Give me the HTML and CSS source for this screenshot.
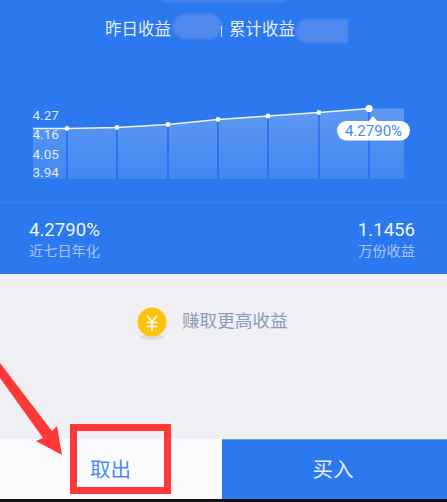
FILE: index.html
```html
<!DOCTYPE html>
<html lang="zh">
<head>
    <meta charset="UTF-8">
    <meta name="viewport" content="width=device-width, initial-scale=1.0">
    <title>收益</title>
    <link rel="stylesheet" href="styles.css">
</head>
<body>
    <div class="page">
        <section class="hero">
            <span class="smudge smudge-top"></span>
            <span class="smudge smudge-left"></span>
            <span class="smudge smudge-right"></span>
            <span class="tick"></span>
            <div class="summary">
                <span class="summary-a">昨日收益</span>
                <span class="summary-sep"></span>
                <span>累计收益</span>
            </div>
            <svg class="chart" width="447" height="110" viewBox="0 92 447 110">
                <defs>
                    <linearGradient id="area" x1="0" y1="0" x2="0" y2="1">
                        <stop offset="0" stop-color="#fff" stop-opacity="0.24"/>
                        <stop offset="1" stop-color="#fff" stop-opacity="0.1"/>
                    </linearGradient>
                </defs>
                <polygon fill="url(#area)" points="33,128.5 67,128.5 117,127.5 168,124.5 218,119.5 268,116 319,112.5 369,108.5 404,108.5 404,179 33,179"/>
                <g stroke="#1c6cf0" stroke-width="1.4">
                    <line x1="67" y1="128" x2="67" y2="179"/>
                    <line x1="117" y1="127" x2="117" y2="179"/>
                    <line x1="168" y1="124" x2="168" y2="179"/>
                    <line x1="218" y1="119" x2="218" y2="179"/>
                    <line x1="268" y1="116" x2="268" y2="179"/>
                    <line x1="319" y1="112" x2="319" y2="179"/>
                    <line x1="369" y1="108" x2="369" y2="179"/>
                </g>
                <polyline fill="none" stroke="#fff" stroke-opacity="0.9" stroke-width="1.3" points="33,128.5 67,128.5 117,127.5 168,124.5 218,119.5 268,116 319,112.5 369,108.5"/>
                <g fill="#fff">
                    <circle cx="67" cy="128.5" r="2.4"/>
                    <circle cx="117" cy="127.5" r="2.4"/>
                    <circle cx="168" cy="124.5" r="2.4"/>
                    <circle cx="218" cy="119.5" r="2.4"/>
                    <circle cx="268" cy="116" r="2.4"/>
                    <circle cx="319" cy="112.5" r="2.4"/>
                    <circle cx="369" cy="108.5" r="3.6"/>
                </g>
                <g class="axis">
                    <text x="32.5" y="120">4.27</text>
                    <text x="32.5" y="139">4.16</text>
                    <text x="32.5" y="159">4.05</text>
                    <text x="32.5" y="177">3.94</text>
                </g>
                <polygon fill="#fff" points="373,116 368,122 378,122"/>
                <rect x="337" y="121" width="73" height="19.5" rx="9.7" fill="#fff"/>
                <text class="tip" x="373.5" y="135.5" text-anchor="middle">4.2790%</text>
            </svg>
            <div class="stats">
                <div>
                    <div class="stat-value">4.2790%</div>
                    <div class="stat-label">近七日年化</div>
                </div>
                <div class="stat-right">
                    <div class="stat-value">1.1456</div>
                    <div class="stat-label">万份收益</div>
                </div>
            </div>
        </section>

        <section class="promo">
            <span class="coin">
                <svg width="30" height="34" viewBox="0 0 30 34">
                    <ellipse cx="15" cy="30" rx="12" ry="3" fill="#dcdcdc"/>
                    <circle cx="15" cy="15" r="14.5" fill="#ffc30f"/>
                    <path d="M10 8.5 L15 15 L20 8.5 M9.5 15.5 H20.5 M9.5 19.5 H20.5 M15 15 V24" fill="none" stroke="#fff" stroke-width="1.6"/>
                </svg>
            </span>
            <span class="promo-text">赚取更高收益</span>
        </section>

        <footer class="actions">
            <div class="btn btn-out">取出</div>
            <div class="btn btn-buy">买入</div>
        </footer>
        <div class="bottom-edge"></div>

        <svg class="arrow" width="70" height="100" viewBox="0 360 70 100">
            <polygon fill="#ff3838" points="0,363 52,431 57,426 62,455 36,441 43,438 0,378"/>
        </svg>
        <div class="redbox"></div>
    </div>
</body>
</html>
```

FILE: styles.css
```css
* { box-sizing: border-box; }
body { margin: 0; background: #f0eff4; font-family: Roboto, "Noto Sans CJK SC", sans-serif; }
.page { position: relative; width: 447px; height: 502px; overflow: hidden; display: flex; flex-direction: column; }

.hero { position: relative; height: 274px; background: #2c79ef; color: #fff; }
.summary { display: flex; height: 92px; padding: 18px 0 0 105px; font-size: 16.5px; line-height: 23px; color: rgba(255,255,255,0.88); }
.summary-sep { width: 58px; }
.chart { display: block; height: 110px; }
.axis text { font-size: 13.5px; fill: rgba(255,255,255,0.85); }
.tip { font-size: 15px; fill: #3d8cf0; }
.stats { display: flex; justify-content: space-between; align-items: flex-start; height: 72px; padding: 16px 32px 0 29px; border-top: 1px solid #3b82f0; }
.stat-right { text-align: right; }
.stat-value { font-size: 18.6px; line-height: 22px; color: rgba(255,255,255,0.95); }
.stat-label { font-size: 14.2px; line-height: 20px; color: rgba(255,255,255,0.58); }

.smudge { position: absolute; background: #5089ee; filter: blur(1px); }
.smudge-top { left: 163px; top: 0; width: 123px; height: 2px; }
.smudge-left { left: 173px; top: 14px; width: 49px; height: 25px; border-radius: 14px; }
.smudge-right { left: 296px; top: 19px; width: 52px; height: 24px; border-radius: 12px 0 0 12px; }
.tick { position: absolute; left: 221px; top: 26px; width: 1px; height: 11px; background: rgba(255,255,255,0.8); }

.promo { display: flex; align-items: flex-start; height: 165px; padding: 33px 0 0 137px; }
.coin { display: block; height: 34px; }
.promo-text { margin-left: 15px; font-size: 17.6px; line-height: 28px; color: #8c9cb9; }

.actions { display: flex; height: 60px; }
.btn { display: flex; align-items: center; justify-content: center; width: 50%; font-size: 20.5px; padding-bottom: 3px; }
.btn-out { background: #fbfbfe; color: #4a8cf2; flex: 0 0 222px; padding-right: 1px; }
.btn-buy { background: #2c79ef; color: rgba(255,255,255,0.9); flex: 1; border-top: 1px solid #6d9ef5; padding-right: 3px; }
.bottom-edge { height: 3px; background: #111; }

/* annotation drawn over the screenshot */
.arrow { position: absolute; left: 0; top: 360px; }
.redbox { position: absolute; left: 70px; top: 424px; width: 101px; height: 70px; border: 7px solid #ff3838; }
```
